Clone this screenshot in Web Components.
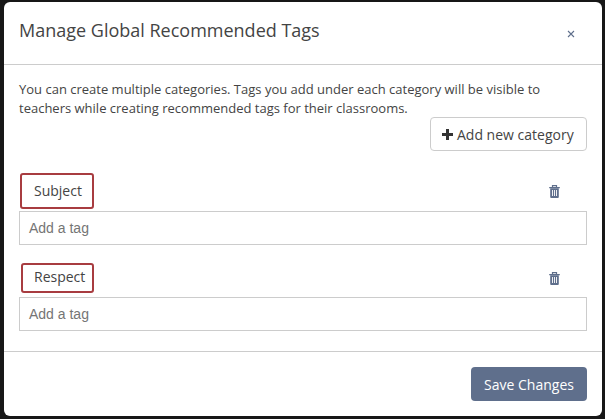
<!DOCTYPE html>
<html>
<head>
<meta charset="utf-8">
<title>Manage Global Recommended Tags</title>
<style>
  html, body { margin: 0; height: 100%; }
  body { background: #171717; font-family: "Open Sans", "Liberation Sans", sans-serif; overflow: hidden; }
</style>
</head>
<body>
<tag-modal heading="Manage Global Recommended Tags">
  <p>You can create multiple categories. Tags you add under each category will be visible to teachers while creating recommended tags for their classrooms.</p>
  <add-button>Add new category</add-button>
  <tag-category name="Subject" style="--box-h:36px; --box-l:1px; --box-w:74px; --box-p:12px; --box-b:0px; --top:22px; --gap:2px"></tag-category>
  <tag-category name="Respect" style="--box-h:30px; --box-l:2px; --box-w:73px; --box-p:11px; --box-b:2px; --top:18px; --gap:4px"></tag-category>
  <save-button slot="footer">Save Changes</save-button>
</tag-modal>

<script>
class TagModal extends HTMLElement{
  constructor(){
    super()
    this.attachShadow({ mode: 'open'});
  }

  connectedCallback(){
    this.shadowRoot.innerHTML = `
    <style>
      :host {
        display: flex;
        flex-direction: column;
        box-sizing: border-box;
        width: 598px;
        height: 414px;
        margin: 2px 3px 3px 4px;
        background: #fff;
        border-radius: 6px;
        color: #444;
      }
      header {
        display: flex;
        justify-content: space-between;
        box-sizing: border-box;
        height: 63px;
        padding: 15px 15px 0 15px;
        border-bottom: 1px solid #ccc;
      }
      h2 {
        margin: 0;
        font-size: 18px;
        font-weight: 400;
        line-height: 27px;
      }
      .close {
        margin: 13px 12px 0 0;
        width: 8px;
        height: 8px;
        color: #5f6f8c;
      }
      main {
        flex: 1;
        padding: 15px 15px 0 15px;
        font-size: 13px;
        line-height: 18.57px;
      }
      footer {
        display: flex;
        justify-content: flex-end;
        padding: 15px;
        border-top: 1px solid #ccc;
      }
      ::slotted(p) {
        margin: 0;
      }
    </style>
    <header>
      <h2>${this.getAttribute("heading")}</h2>
      <svg class="close" viewBox="0 0 8 8"><path d="M1 1l6 6M7 1l-6 6" stroke="currentColor" stroke-width="1.1" fill="none"/></svg>
    </header>
    <main><slot></slot></main>
    <footer><slot name="footer"></slot></footer>
    `
  }
}

class AddButton extends HTMLElement{
  constructor(){
    super()
    this.attachShadow({ mode: 'open'});
    this.shadowRoot.innerHTML = `
    <style>
      :host {
        display: flex;
        justify-content: flex-end;
      }
      button {
        display: flex;
        align-items: center;
        gap: 4px;
        box-sizing: border-box;
        width: 157px;
        height: 34px;
        padding: 0 0 0 11px;
        background: #fff;
        border: 1px solid #ccc;
        border-radius: 4px;
        color: #444;
        white-space: nowrap;
        font: 14px "Open Sans", "Liberation Sans", sans-serif;
      }
      svg { width: 11px; height: 11px; flex: none; }
    </style>
    <button>
      <svg viewBox="0 0 11 11"><path d="M4 0h3v4h4v3H7v4H4V7H0V4h4z" fill="#333"/></svg>
      <slot></slot>
    </button>
    `
  }
}

class TagCategory extends HTMLElement{
  constructor(){
    super()
    this.attachShadow({ mode: 'open'});
  }

  connectedCallback(){
    this.shadowRoot.innerHTML = `
    <style>
      :host {
        display: block;
        margin-top: var(--top);
      }
      .head {
        display: flex;
        align-items: center;
        justify-content: space-between;
        padding-left: var(--box-l);
      }
      .name {
        display: flex;
        align-items: center;
        box-sizing: border-box;
        width: var(--box-w);
        height: var(--box-h);
        padding-left: var(--box-p);
        padding-bottom: var(--box-b);
        border: 2px solid #a83c40;
        border-radius: 3px;
        font-size: 14px;
        color: #444;
      }
      .trash {
        width: 11px;
        height: 13px;
        margin-right: 27px;
      }
      .tag-input {
        box-sizing: border-box;
        height: 34px;
        margin-top: var(--gap);
        padding: 0 9px;
        border: 1px solid #ccc;
        font: 14px/32px "Liberation Sans", Arial, sans-serif;
        color: #757575;
      }
    </style>
    <div class="head">
      <div class="name">${this.getAttribute("name")}</div>
      <svg class="trash" viewBox="0 0 11 13"><path d="M3.5 2V.6h4V2M.2 2.6h10.6" stroke="#5f6f8c" stroke-width="1.2" fill="none"/><path d="M1.2 3.2h8.6V12a1 1 0 0 1-1 1H2.200a1 1 0 0 1-1-1z" fill="#5f6f8c"/><path d="M3.5 5v6M5.500 5v6M7.500 5v6" stroke="#fff" stroke-width=".9"/></svg>
    </div>
    <div class="tag-input">Add a tag</div>
    `
  }
}

class SaveButton extends HTMLElement{
  constructor(){
    super()
    this.attachShadow({ mode: 'open'});
    this.shadowRoot.innerHTML = `
    <style>
      :host { display: block; }
      button {
        box-sizing: border-box;
        width: 116px;
        height: 34px;
        padding: 0;
        background: #5f6f8c;
        border: none;
        border-radius: 4px;
        color: #fff;
        font: 14px "Open Sans", "Liberation Sans", sans-serif;
      }
    </style>
    <button><slot></slot></button>
    `
  }
}

customElements.define('tag-modal', TagModal);
customElements.define('add-button', AddButton);
customElements.define('tag-category', TagCategory);
customElements.define('save-button', SaveButton);
</script>
</body>
</html>
